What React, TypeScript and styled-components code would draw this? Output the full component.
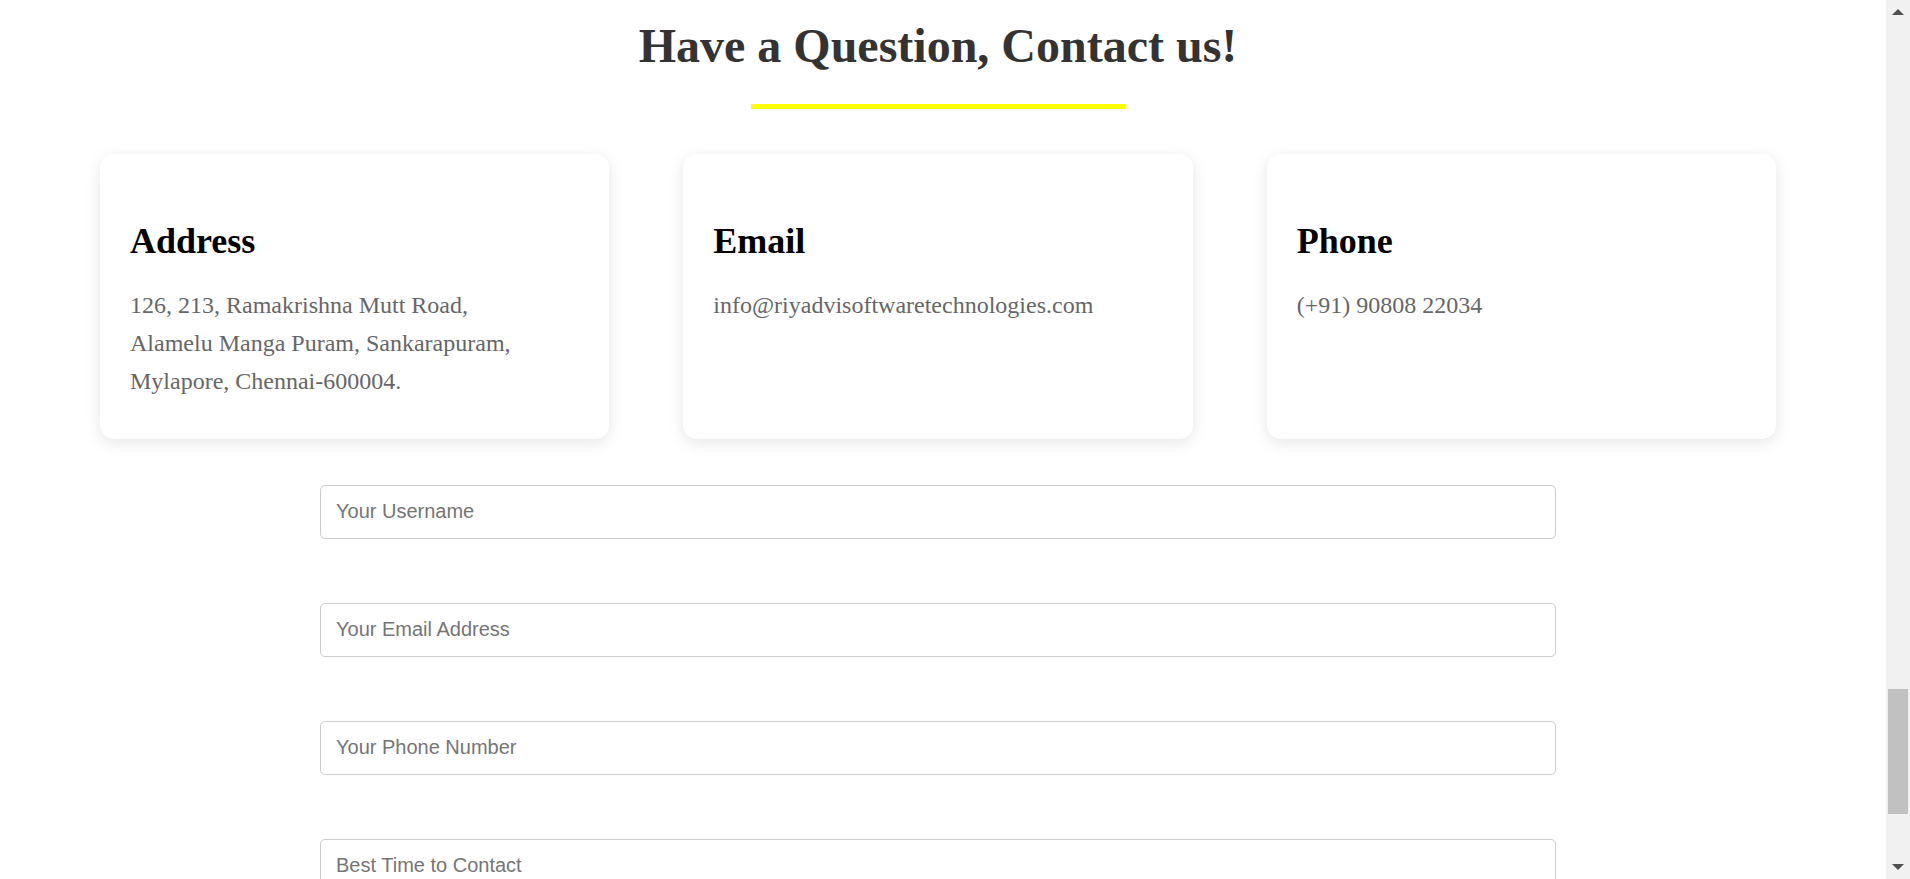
import styled, { createGlobalStyle } from 'styled-components'

const GlobalStyle = createGlobalStyle`
    html, body {
        margin: 0;
        padding: 0;
        background: #ffffff;
        overflow: hidden;
    }
    * {
        box-sizing: border-box;
    }
`

const Page = styled.div`
    display: flex;
    width: 100%;
    height: 100vh;
    overflow: hidden;
`

const Main = styled.main`
    flex: 1;
    padding-right: 10px;
    display: flex;
    flex-direction: column;
    align-items: center;

    & > * {
        flex-shrink: 0;
    }
`

const Title = styled.h1`
    margin: 17px 0 0;
    font-family: 'Liberation Serif', 'Times New Roman', serif;
    font-size: 48px;
    line-height: 57.6px;
    font-weight: 700;
    color: #333333;
    text-align: center;
`

const Underline = styled.div`
    width: 375px;
    height: 5px;
    margin-top: 29px;
    background-color: #ffff00;
`

const CardGrid = styled.section`
    width: 100%;
    margin-top: 45px;
    padding: 0 100px;
    display: grid;
    grid-template-columns: repeat(3, 1fr);
    gap: 74px;
`

const Card = styled.article`
    background-color: #ffffff;
    border-radius: 14px;
    box-shadow: 0 4px 16px rgba(0, 0, 0, 0.1);
    padding: 66px 30px 38px;
`

const CardTitle = styled.h3`
    margin: 0;
    font-family: 'Liberation Serif', 'Times New Roman', serif;
    font-size: 36px;
    line-height: 43px;
    font-weight: 700;
    color: #000000;
`

const CardText = styled.p`
    margin: 23px 0 0;
    font-family: 'Liberation Serif', 'Times New Roman', serif;
    font-size: 24px;
    line-height: 38.4px;
    color: #666666;
`

const Form = styled.form`
    width: 1236px;
    margin-top: 46px;
    display: flex;
    flex-direction: column;
    gap: 64px;
`

const Input = styled.input`
    width: 100%;
    height: 54px;
    flex-shrink: 0;
    padding: 0 15px;
    border: 1px solid #cccccc;
    border-radius: 5px;
    font-family: 'Liberation Sans', Arial, sans-serif;
    font-size: 20px;
    color: #333333;
    background: #ffffff;
    outline: none;

    &::placeholder {
        color: #757575;
    }
`

const ScrollTrack = styled.div`
    width: 24px;
    flex-shrink: 0;
    height: 100%;
    background-color: #f1f1f1;
    display: flex;
    flex-direction: column;
`

const ScrollButton = styled.div`
    height: 24px;
    flex-shrink: 0;
    display: flex;
    align-items: center;
    justify-content: center;
`

const Arrow = styled.span<{ $down?: boolean }>`
    width: 0;
    height: 0;
    border-left: 6px solid transparent;
    border-right: 6px solid transparent;
    ${({ $down }) =>
        $down
            ? 'border-top: 6px solid #505050;'
            : 'border-bottom: 6px solid #505050;'}
`

const ScrollSpace = styled.div`
    flex: 1;
    padding: 0 2px;
`

const Thumb = styled.div<{ $offset: number; $size: number }>`
    margin-top: ${({ $offset }) => $offset}px;
    height: ${({ $size }) => $size}px;
    background-color: #c1c1c1;
`

const cards = [
    {
        title: 'Address',
        lines: [
            '126, 213, Ramakrishna Mutt Road,',
            'Alamelu Manga Puram, Sankarapuram,',
            'Mylapore, Chennai-600004.',
        ],
    },
    { title: 'Email', lines: ['info@riyadvisoftwaretechnologies.com'] },
    { title: 'Phone', lines: ['(+91) 90808 22034'] },
]

const fields = [
    { type: 'text', placeholder: 'Your Username' },
    { type: 'email', placeholder: 'Your Email Address' },
    { type: 'tel', placeholder: 'Your Phone Number' },
    { type: 'text', placeholder: 'Best Time to Contact' },
]

const App = () => {
    return (
        <>
            <GlobalStyle />
            <Page>
                <Main>
                    <Title>Have a Question, Contact us!</Title>
                    <Underline />
                    <CardGrid>
                        {cards.map((card) => (
                            <Card key={card.title}>
                                <CardTitle>{card.title}</CardTitle>
                                <CardText>
                                    {card.lines.map((line, i) => (
                                        <span key={line}>
                                            {i > 0 && <br />}
                                            {line}
                                        </span>
                                    ))}
                                </CardText>
                            </Card>
                        ))}
                    </CardGrid>
                    <Form onSubmit={(e) => e.preventDefault()}>
                        {fields.map((field) => (
                            <Input
                                key={field.placeholder}
                                type={field.type}
                                placeholder={field.placeholder}
                            />
                        ))}
                    </Form>
                </Main>
                <ScrollTrack>
                    <ScrollButton>
                        <Arrow />
                    </ScrollButton>
                    <ScrollSpace>
                        <Thumb $offset={665} $size={125} />
                    </ScrollSpace>
                    <ScrollButton>
                        <Arrow $down />
                    </ScrollButton>
                </ScrollTrack>
            </Page>
        </>
    )
}

export default App
